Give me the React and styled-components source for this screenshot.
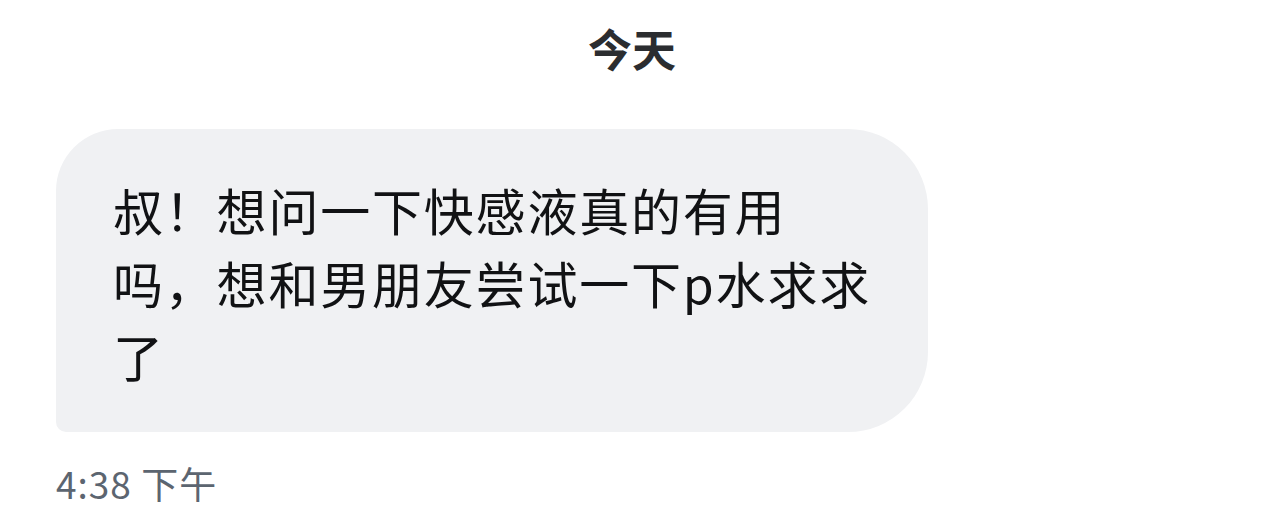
import React from 'react'
import styled, { createGlobalStyle } from 'styled-components'

const GlobalStyle = createGlobalStyle`
  html, body {
    margin: 0;
    padding: 0;
    background: #ffffff;
  }
  body {
    font-family: "Noto Sans CJK SC", "Noto Sans", sans-serif;
  }
`

const Thread = styled.div`
  display: flex;
  flex-direction: column;
  align-items: flex-start;
  padding: 18px 56px 0;
`

const DateHeader = styled.div`
  align-self: stretch;
  text-align: center;
  font-size: 44px;
  font-weight: 700;
  line-height: 60px;
  color: #2b2d30;
  margin-left: -56px;
  margin-right: -56px;
`

const Bubble = styled.div`
  margin-top: 51px;
  background: #f0f1f3;
  color: #111214;
  font-size: 50px;
  line-height: 73px;
  letter-spacing: 1.8px;
  padding: 44px 57px 40px;
  border-radius: 62px 80px 80px 10px;
  white-space: pre-line;
`

const Timestamp = styled.div`
  margin-top: 31px;
  font-size: 37px;
  line-height: 40px;
  letter-spacing: 1px;
  color: #5c6570;
`

const message = '叔！想问一下快感液真的有用\n吗，想和男朋友尝试一下p水求求\n了'

export default function App() {
  return (
    <>
      <GlobalStyle />
      <Thread>
        <DateHeader>今天</DateHeader>
        <Bubble>{message}</Bubble>
        <Timestamp>4:38 下午</Timestamp>
      </Thread>
    </>
  )
}
